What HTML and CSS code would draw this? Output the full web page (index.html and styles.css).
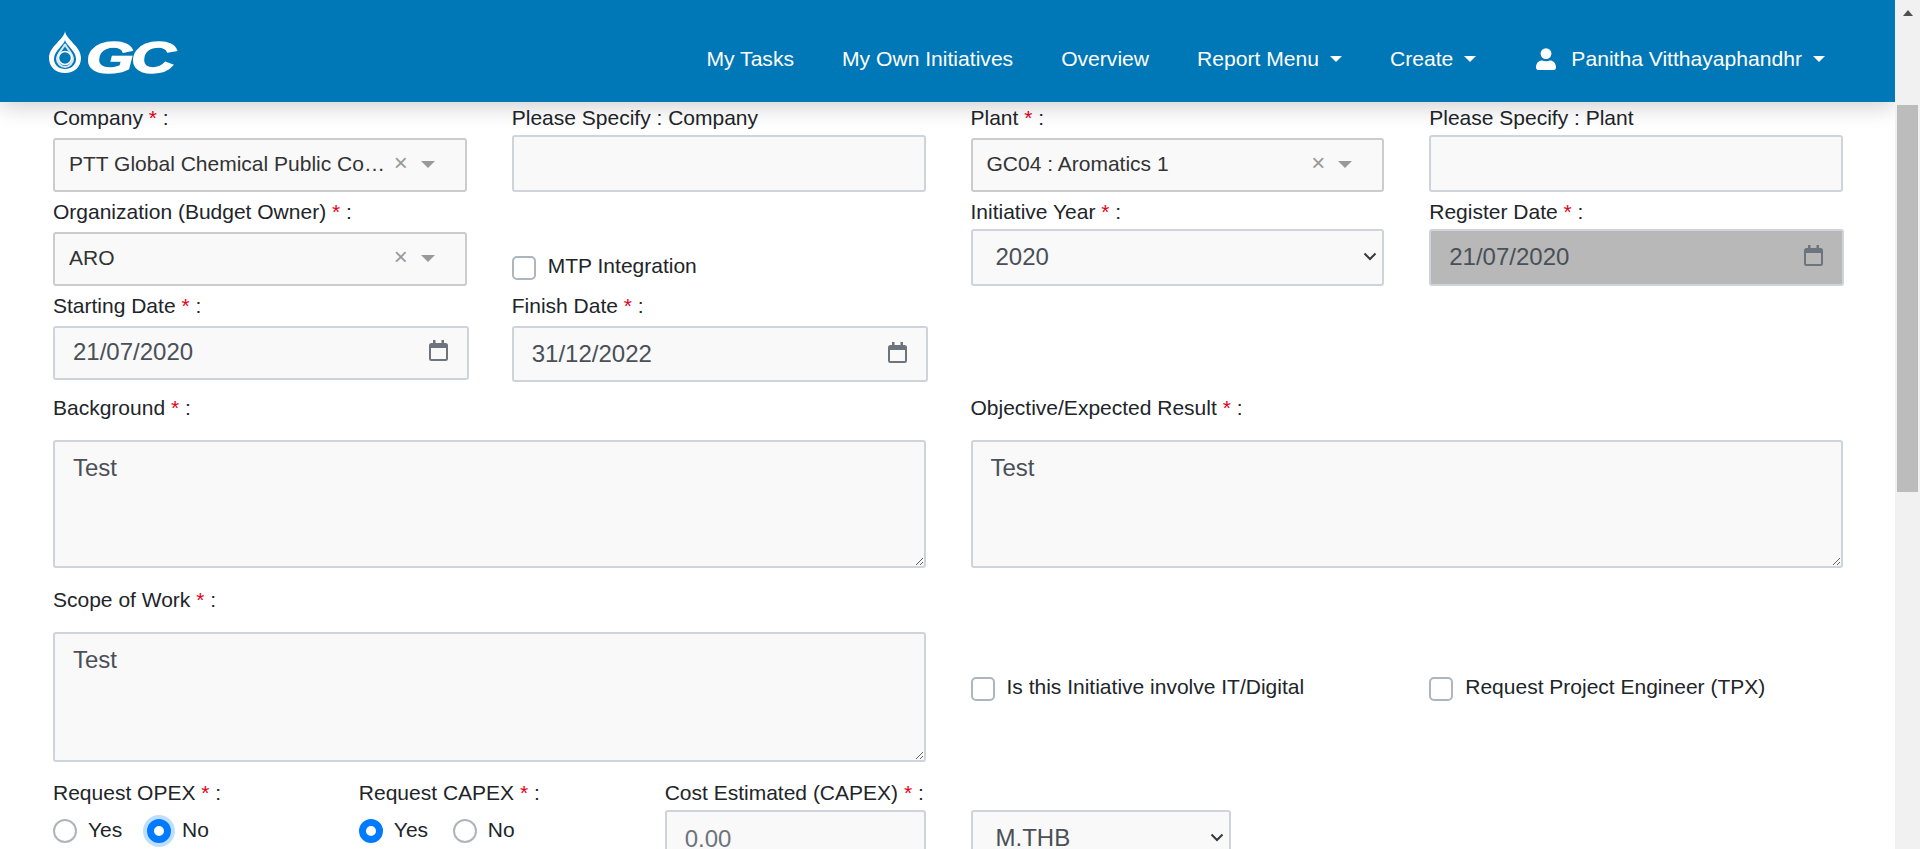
FILE: index.html
```html
<!DOCTYPE html>
<html lang="en">
<head>
  <meta charset="UTF-8">
  <meta name="viewport" content="width=device-width, initial-scale=1.0">
  <title>Initiative Detail</title>
  <link rel="stylesheet" href="styles.css">
</head>
<body>
  <div class="page">
    <header class="topbar">
      <a class="logo" href="#">
        <svg class="logo-drop" viewBox="0 0 32 42" width="32" height="42">
          <path fill="#fff" d="M16 0C17 9 32 15 32 27C32 36 25 42 16 42C7 42 0 36 0 27C0 15 15 9 16 0Z"/>
          <path fill="#0077b7" d="M16 9C17 14 27 20 27 28C27 34 22 38 16 38C10 38 5 34 5 28C5 20 15 14 16 9Z"/>
          <path fill="none" stroke="#d5e9f4" stroke-width="2" d="M16 13C17 17 24 22 24 28C24 32 20 36 16 36C12 36 8 32 8 28C8 22 15 17 16 13Z"/>
          <circle cx="16" cy="27" r="6.5" fill="#0077b7" stroke="#fff" stroke-width="1.5"/>
        </svg>
        <span class="logo-text">GC</span>
      </a>
      <nav class="nav">
        <a href="#">My Tasks</a>
        <a href="#">My Own Initiatives</a>
        <a href="#">Overview</a>
        <a href="#" class="caret">Report Menu</a>
        <a href="#" class="caret">Create</a>
        <a href="#" class="caret user">
          <svg viewBox="0 0 20 22" width="20" height="22"><circle cx="10" cy="5.6" r="5.4" fill="#fff"/><path fill="#fff" d="M0 19.5C0 15 3 12.6 6 12.6C8.5 13.6 11.5 13.6 14 12.6C17 12.6 20 15 20 19.5C20 21 19 22 18 22H2C1 22 0 21 0 19.5Z"/></svg>
          <span>Panitha Vitthayaphandhr</span>
        </a>
      </nav>
    </header>

    <form class="form">
      <div class="row row-1">
        <div class="field">
          <label>Company <span class="req">*</span> :</label>
          <div class="control pick"><span class="value">PTT Global Chemical Public Co…</span><span class="clear">×</span><span class="arrow"></span></div>
        </div>
        <div class="field">
          <label>Please Specify : Company</label>
          <input class="control tall" type="text">
        </div>
        <div class="field">
          <label>Plant <span class="req">*</span> :</label>
          <div class="control pick"><span class="value">GC04 : Aromatics 1</span><span class="clear">×</span><span class="arrow"></span></div>
        </div>
        <div class="field">
          <label>Please Specify : Plant</label>
          <input class="control tall" type="text">
        </div>
      </div>

      <div class="row row-2">
        <div class="field">
          <label>Organization (Budget Owner) <span class="req">*</span> :</label>
          <div class="control pick"><span class="value">ARO</span><span class="clear">×</span><span class="arrow"></span></div>
        </div>
        <label class="check mtp"><input type="checkbox"><span>MTP Integration</span></label>
        <div class="field">
          <label>Initiative Year <span class="req">*</span> :</label>
          <div class="control tall big drop"><span>2020</span><svg viewBox="0 0 14 9" width="14" height="9"><path d="M1.5 1.5L7 7L12.5 1.5" fill="none" stroke="#343a40" stroke-width="2"/></svg></div>
        </div>
        <div class="field">
          <label>Register Date <span class="req">*</span> :</label>
          <div class="control tall big date off"><span>21/07/2020</span>
            <svg class="cal" viewBox="0 0 19 21" width="19" height="21"><use href="#cal"/></svg>
          </div>
        </div>
      </div>

      <div class="row row-3">
        <div class="field">
          <label>Starting Date <span class="req">*</span> :</label>
          <div class="control big date wide"><span>21/07/2020</span>
            <svg class="cal" viewBox="0 0 19 21" width="19" height="21"><use href="#cal"/></svg>
          </div>
        </div>
        <div class="field">
          <label>Finish Date <span class="req">*</span> :</label>
          <div class="control finish big date wide"><span>31/12/2022</span>
            <svg class="cal" viewBox="0 0 19 21" width="19" height="21"><use href="#cal"/></svg>
          </div>
        </div>
      </div>

      <div class="row row-4">
        <div class="field half">
          <label>Background <span class="req">*</span> :</label>
          <textarea class="control big note">Test</textarea>
        </div>
        <div class="field half">
          <label>Objective/Expected Result <span class="req">*</span> :</label>
          <textarea class="control big note">Test</textarea>
        </div>
      </div>

      <div class="row row-5">
        <div class="field half">
          <label>Scope of Work <span class="req">*</span> :</label>
          <textarea class="control big note">Test</textarea>
        </div>
        <label class="check it"><input type="checkbox"><span>Is this Initiative involve IT/Digital</span></label>
        <label class="check it"><input type="checkbox"><span>Request Project Engineer (TPX)</span></label>
      </div>

      <div class="row row-6">
        <div class="field">
          <label>Request OPEX <span class="req">*</span> :</label>
          <div class="radios">
            <label class="radio"><input type="radio" name="opex"><span>Yes</span></label>
            <label class="radio"><input class="focus" type="radio" name="opex" checked><span>No</span></label>
          </div>
        </div>
        <div class="field">
          <label>Request CAPEX <span class="req">*</span> :</label>
          <div class="radios">
            <label class="radio"><input type="radio" name="capex" checked><span>Yes</span></label>
            <label class="radio"><input type="radio" name="capex"><span>No</span></label>
          </div>
        </div>
        <div class="field">
          <label>Cost Estimated (CAPEX) <span class="req">*</span> :</label>
          <input class="control tall big cost" type="text" value="0.00">
        </div>
        <div class="field unit">
          <div class="control tall big drop"><span>M.THB</span><svg viewBox="0 0 14 9" width="14" height="9"><path d="M1.5 1.5L7 7L12.5 1.5" fill="none" stroke="#343a40" stroke-width="2"/></svg></div>
        </div>
      </div>
    </form>
  </div>

  <div class="scrollbar">
    <div class="scroll-up"></div>
    <div class="scroll-thumb"></div>
  </div>

  <svg class="defs" width="0" height="0">
    <symbol id="cal" viewBox="0 0 19 21">
      <path fill="none" stroke="#6c757d" stroke-width="2" d="M2.5 4H16.5Q18 4 18 5.5V18.5Q18 20 16.5 20H2.5Q1 20 1 18.5V5.5Q1 4 2.5 4Z"/>
      <path fill="#6c757d" d="M1 4H18V8H1ZM4 0H6.5V4H4ZM12.5 0H15V4H12.5Z"/>
    </symbol>
  </svg>
</body>
</html>
```

FILE: styles.css
```css
* {
  box-sizing: border-box;
}
html, body {
  height: 849px;
  margin: 0;
  overflow: hidden;
}
body {
  display: flex;
  font-family: "Liberation Sans", Arial, sans-serif;
  font-size: 21px;
  color: #212529;
  background-color: #fff;
}
.page {
  flex: 1;
  min-width: 0;
  height: 849px;
  overflow: hidden;
}
.defs {
  position: absolute;
}

/* header */
.topbar {
  position: relative;
  z-index: 2;
  display: flex;
  align-items: center;
  height: 102px;
  padding: 0 70px 0 49px;
  background-color: #0077b7;
  box-shadow: 0 4px 22px rgba(0, 0, 0, 0.2);
}
.logo {
  display: flex;
  align-items: center;
  gap: 5px;
  height: 42px;
  margin-top: 1px;
  text-decoration: none;
}
.logo-text {
  font-size: 44px;
  line-height: 42px;
  font-weight: bold;
  font-style: italic;
  color: #fff;
  letter-spacing: -2px;
  -webkit-text-stroke: 1.5px #fff;
  display: inline-block;
  transform: scaleX(1.4);
  transform-origin: left center;
  margin-top: 12px;
}
.nav {
  display: flex;
  align-items: center;
  gap: 48px;
  margin-left: auto;
  margin-top: 16px;
  font-size: 21.1px;
}
.nav a {
  display: flex;
  align-items: center;
  color: #fff;
  text-decoration: none;
}
.caret::after {
  content: "";
  margin-left: 11px;
  border-top: 6px solid #fff;
  border-left: 6px solid transparent;
  border-right: 6px solid transparent;
}
.nav .user {
  margin-left: 12px;
}
.user svg {
  margin-right: 15px;
}

/* form layout */
.form {
  padding: 3px 52px 0 53px;
}
.row {
  display: grid;
  grid-template-columns: repeat(4, 1fr);
  column-gap: 45px;
  align-items: start;
}
.row-2 {
  margin-top: 7px;
}
.row-3 {
  margin-top: 7px;
}
.row-4 {
  margin-top: 13px;
}
.row-5 {
  margin-top: 19px;
}
.row-6 {
  grid-template-columns: repeat(6, 1fr);
  margin-top: 18px;
}
.field label {
  display: block;
  height: 26px;
  line-height: 26px;
  white-space: nowrap;
}
.half {
  grid-column: span 2;
}
.req {
  color: #e3001b;
}

/* controls */
.control {
  display: block;
  width: 100%;
  height: 54px;
  margin-top: 7px;
  padding: 0 18px;
  border: 2px solid #ced4da;
  border-radius: 3px;
  background-color: #f9f9f9;
  font-family: inherit;
  font-size: 21px;
  color: #495057;
}
.tall {
  height: 57px;
  margin-top: 4px;
}
.big {
  font-size: 24px;
}
.pick {
  display: flex;
  align-items: center;
  border-color: #cccccc;
  padding: 0 30px 2px 14px;
  color: #333;
}
.pick .value {
  flex: 1;
  white-space: nowrap;
  overflow: hidden;
}
.clear {
  font-size: 24px;
  line-height: 20px;
  color: #999;
  margin-right: 13px;
  margin-top: -2px;
}
.arrow {
  border-top: 7px solid #999;
  border-left: 7px solid transparent;
  border-right: 7px solid transparent;
}
.date, .drop {
  display: flex;
  align-items: center;
  justify-content: space-between;
  padding-bottom: 2px;
}
.date {
  padding-right: 19px;
}
.date .cal {
  margin-top: -3px;
}
.off {
  background-color: #b8b8b8;
  width: calc(100% + 1px);
}
.wide {
  width: calc(100% + 2px);
}
.finish {
  height: 56px;
  padding-bottom: 0;
}
.drop {
  padding-right: 5px;
  padding-left: 23px;
}
.note {
  height: 128px;
  margin-top: 19px;
  padding: 12px 18px;
  resize: both;
}
.row-5 .note {
  height: 130px;
}
.cost {
  margin-top: 4px;
  color: #6c757d;
}
.unit {
  padding-top: 30px;
}
.unit .control {
  margin-top: 0;
}

/* checks and radios */
.check {
  display: flex;
  align-items: center;
  height: 24px;
}
.check span {
  margin-top: -4px;
}
.check input {
  appearance: none;
  flex: none;
  width: 24px;
  height: 24px;
  margin: 0 12px 0 0;
  border: 2px solid #adb5bd;
  border-radius: 5px;
  background-color: #fff;
}
.mtp {
  margin-top: 57px;
}
.it {
  margin-top: 90px;
}
.radios {
  display: flex;
  margin-top: 13px;
}
.field .radio {
  display: flex;
  align-items: center;
  height: 24px;
  line-height: 24px;
  width: 94px;
}
.radio span {
  margin-top: -3px;
  margin-left: -1px;
}
.radio input {
  appearance: none;
  flex: none;
  width: 24px;
  height: 24px;
  margin: 0 12px 0 0;
  border: 2px solid #adb5bd;
  border-radius: 50%;
  background-color: #fff;
}
.radio input:checked {
  border-color: #007bff;
  background-color: #fff;
  border-width: 7px;
}
.radio .focus {
  box-shadow: 0 0 0 4px rgba(0, 123, 255, 0.25);
}

/* fake window scrollbar, page is clipped to the photographed scroll position */
.scrollbar {
  flex: none;
  width: 25px;
  height: 849px;
  background-color: #f1f1f1;
  padding: 10px 2px 0;
}
.scroll-up {
  width: 0;
  margin: 0 auto;
  border-bottom: 6px solid #505050;
  border-left: 5px solid transparent;
  border-right: 5px solid transparent;
}
.scroll-thumb {
  height: 387px;
  margin-top: 89px;
  background-color: #bcbcbc;
}
```
